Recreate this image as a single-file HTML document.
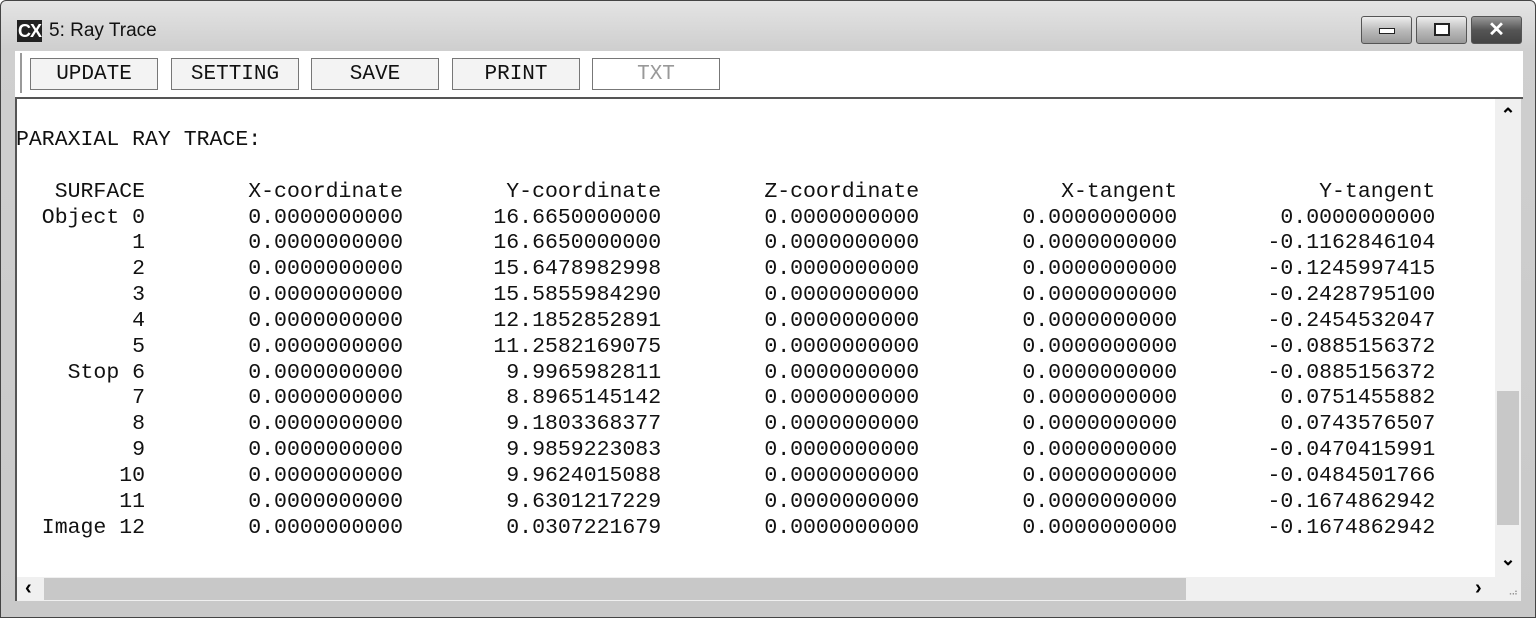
<!DOCTYPE html>
<html><head><style>
body{margin:0;width:1536px;height:618px;overflow:hidden;background:#fff;font-family:"Liberation Sans",sans-serif}
.win{position:absolute;left:0;top:0;width:1534px;height:616px;background:linear-gradient(#e4e4e4,#cfcfcf 48px,#c9c9c9);border:1px solid #444;border-radius:6px 6px 0 0}
.title{position:absolute;left:48px;top:19px;font-size:19px;color:#111}
.logo{position:absolute;left:16px;top:19px;width:25px;height:22px;background:#222;color:#fff;font-size:18px;line-height:22px;text-align:center;font-weight:bold;letter-spacing:-1px}
.cb{position:absolute;top:15px;height:26px;border:1px solid #555;border-radius:3px;background:linear-gradient(#eee,#bbb 50%,#999)}
.tool{position:absolute;left:14px;top:50px;width:1508px;height:46px;background:#fff;border-bottom:2px solid #555}
.tool:before{content:"";position:absolute;left:5px;top:2px;width:2px;height:40px;background:#999}
.btn{position:absolute;top:7px;width:126px;height:30px;border:1px solid #777;background:#f3f3f3;font-family:"Liberation Mono",monospace;font-size:21px;line-height:32px;text-align:center;color:#111}
.content{position:absolute;left:14px;top:98px;width:1480px;height:478px;background:#fff;border-left:2px solid #555}
pre{position:absolute;left:-1px;top:29px;margin:0;font-family:"Liberation Mono",monospace;font-size:21.5px;line-height:25.85px;color:#111}
.vs{position:absolute;left:1494px;top:98px;width:26px;height:478px;background:#f0f0f0}
.hs{position:absolute;left:14px;top:576px;width:1480px;height:24px;background:#f0f0f0;border-left:2px solid #555}
.corner{position:absolute;left:1494px;top:576px;width:26px;height:24px;background:#f0f0f0}
</style></head><body>
<div class="win">
<div class="logo">CX</div>
<div class="title">5: Ray Trace</div>
<div class="cb" style="left:1360px;width:49px"><div style="position:absolute;left:17px;top:11px;width:14px;height:4px;border:1px solid #222;background:#fff"></div></div>
<div class="cb" style="left:1415px;width:49px"><div style="position:absolute;left:17px;top:6px;width:12px;height:9px;border:2px solid #222;background:#fff"></div></div>
<div class="cb" style="left:1470px;width:49px;background:linear-gradient(#999,#555 50%,#444)"><div style="position:absolute;left:0;width:49px;top:0;text-align:center;color:#fff;font-weight:bold;font-size:20px;line-height:26px">✕</div></div>
<div class="tool">
<div class="btn" style="left:15px">UPDATE</div>
<div class="btn" style="left:156px">SETTING</div>
<div class="btn" style="left:296px">SAVE</div>
<div class="btn" style="left:437px">PRINT</div>
<div class="btn" style="left:577px;background:#fff;color:#999">TXT</div>
</div>
<div class="content"><pre>PARAXIAL RAY TRACE:

   SURFACE        X-coordinate        Y-coordinate        Z-coordinate           X-tangent           Y-tangent
  Object 0        0.0000000000       16.6650000000        0.0000000000        0.0000000000        0.0000000000
         1        0.0000000000       16.6650000000        0.0000000000        0.0000000000       -0.1162846104
         2        0.0000000000       15.6478982998        0.0000000000        0.0000000000       -0.1245997415
         3        0.0000000000       15.5855984290        0.0000000000        0.0000000000       -0.2428795100
         4        0.0000000000       12.1852852891        0.0000000000        0.0000000000       -0.2454532047
         5        0.0000000000       11.2582169075        0.0000000000        0.0000000000       -0.0885156372
    Stop 6        0.0000000000        9.9965982811        0.0000000000        0.0000000000       -0.0885156372
         7        0.0000000000        8.8965145142        0.0000000000        0.0000000000        0.0751455882
         8        0.0000000000        9.1803368377        0.0000000000        0.0000000000        0.0743576507
         9        0.0000000000        9.9859223083        0.0000000000        0.0000000000       -0.0470415991
        10        0.0000000000        9.9624015088        0.0000000000        0.0000000000       -0.0484501766
        11        0.0000000000        9.6301217229        0.0000000000        0.0000000000       -0.1674862942
  Image 12        0.0000000000        0.0307221679        0.0000000000        0.0000000000       -0.1674862942</pre></div>
<div class="vs">
<div style="position:absolute;top:6px;width:26px;text-align:center;font-size:18px;font-weight:bold">&#8963;</div>
<div style="position:absolute;left:2px;top:292px;width:22px;height:134px;background:#c8c8c8"></div>
<div style="position:absolute;top:450px;width:26px;text-align:center;font-size:18px;font-weight:bold">&#8964;</div>
</div>
<div class="hs">
<div style="position:absolute;left:8px;top:0px;font-size:20px;font-weight:bold">&#8249;</div>
<div style="position:absolute;left:27px;top:1px;width:1142px;height:22px;background:#c8c8c8"></div>
<div style="position:absolute;left:1458px;top:0px;font-size:20px;font-weight:bold">&#8250;</div>
</div>
<div class="corner"><div style="position:absolute;right:4px;bottom:3px;font-size:9px;color:#888;letter-spacing:-1px">⠠⠴</div></div>
</div>
</body></html>
